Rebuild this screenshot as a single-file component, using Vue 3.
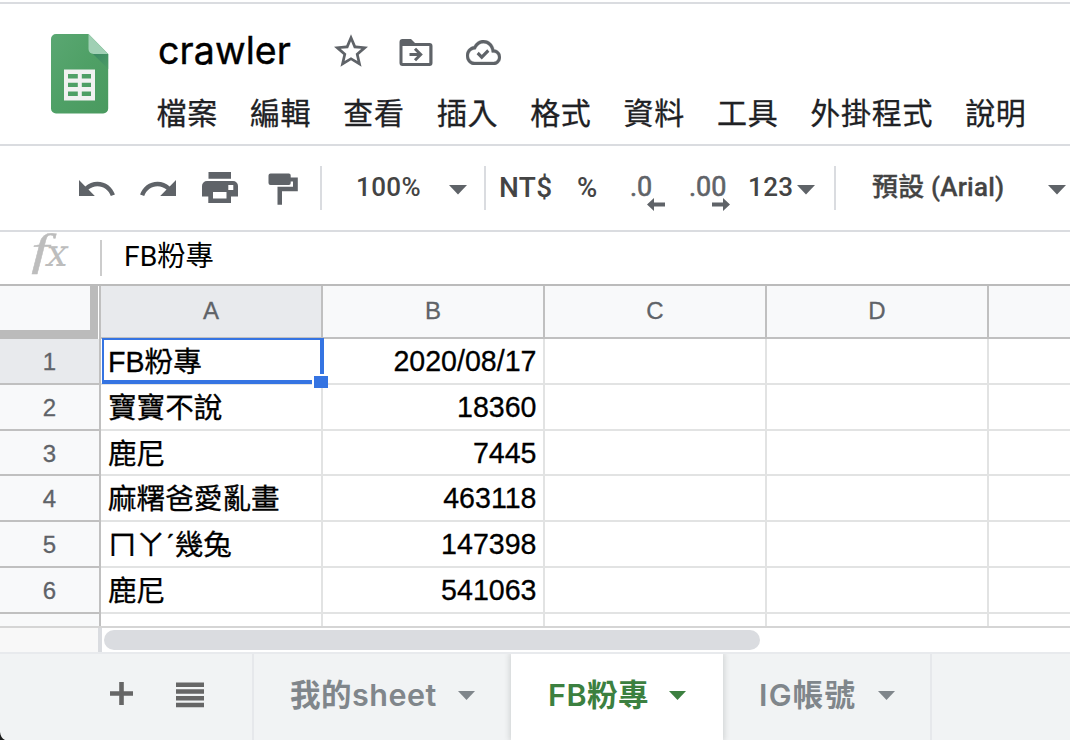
<script setup>
const menus = ['檔案', '編輯', '查看', '插入', '格式', '資料', '工具', '外掛程式', '說明']
const columns = ['A', 'B', 'C', 'D', '']
const rows = [
  ['FB粉專', '2020/08/17'],
  ['寶寶不說', '18360'],
  ['鹿尼', '7445'],
  ['麻糬爸愛亂畫', '463118'],
  ['ㄇㄚˊ幾兔', '147398'],
  ['鹿尼', '541063'],
]
</script>

<template>
  <div class="app">
    <header class="header">
      <svg class="logo" width="58" height="80" viewBox="0 0 58 80">
        <defs>
          <linearGradient id="doc" x1="0" y1="0" x2="1" y2="1">
            <stop offset="0" stop-color="#5aa772" />
            <stop offset="0.5" stop-color="#4fa066" />
            <stop offset="1" stop-color="#4a9a5f" />
          </linearGradient>
          <linearGradient id="fold" x1="0" y1="0" x2="1" y2="1">
            <stop offset="0" stop-color="#3a8763" />
            <stop offset="1" stop-color="#4c9d65" />
          </linearGradient>
        </defs>
        <path d="M5 0H37.500L57.200 20V74.500a5 5 0 0 1-5 5H5a5 5 0 0 1-5-5V5a5 5 0 0 1 5-5z" fill="url(#doc)" />
        <path d="M41 19L57.200 35V20z" fill="url(#fold)" />
        <path d="M37.500 0L57.200 20H42.500a5 5 0 0 1-5-5z" fill="#a0d0b4" />
        <path d="M13 35.500H44V66.500H13zM17 40V44.500H26.800V40zM30.800 40V44.500H40V40zM17 48.800V53H26.800V48.800zM30.800 48.800V53H40V48.800zM17 57.500V62H26.800V57.500zM30.800 57.500V62H40V57.500z" fill="#f1f1f1" fill-rule="evenodd" />
      </svg>
      <div class="head-main">
        <div class="title-row">
          <span class="title">crawler</span>
          <svg class="star" width="34" height="33" viewBox="2 2 20 19"><path d="M22 9.240l-7.190-.620L12 2 9.190 8.630 2 9.240l5.460 4.730L5.820 21 12 17.270 18.180 21l-1.630-7.030L22 9.240zM12 15.400l-3.760 2.270 1-4.280-3.320-2.880 4.380-.380L12 6.100l1.710 4.040 4.380.380-3.320 2.880 1 4.280L12 15.400z" /></svg>
          <svg class="folder" width="34" height="28" viewBox="0 0 34 28">
            <path d="M3.500 0H12L16 4H30.500A3 3 0 0 1 33.500 7V24A3 3 0 0 1 30.500 27H3.500A3 3 0 0 1 .500 24V3A3 3 0 0 1 3.500 0zM3.500 7V24H30.300V7z" fill-rule="evenodd" />
            <path d="M10.500 15.500H21M16 9.700L21.700 15.500L16 21.300" fill="none" stroke="#5f6368" stroke-width="3" />
          </svg>
          <svg class="cloud" width="35" height="25" viewBox="0 4 24 16" preserveAspectRatio="none">
            <path d="M19.350 10.040C18.670 6.590 15.640 4 12 4 9.110 4 6.600 5.640 5.350 8.040 2.340 8.360 0 10.910 0 14c0 3.310 2.690 6 6 6h13c2.760 0 5-2.240 5-5 0-2.640-2.050-4.780-4.650-4.960zM19 18H6c-2.210 0-4-1.790-4-4 0-2.050 1.530-3.760 3.560-3.970l1.070-.110.500-.950C8.080 7.140 9.940 6 12 6c2.620 0 4.880 1.860 5.390 4.430l.300 1.500 1.530.110c1.560.100 2.780 1.410 2.780 2.960 0 1.650-1.350 3-3 3z" stroke="#5f6368" stroke-width=".2" />
            <path d="M8 12.300L10.800 15L15.300 10.700" fill="none" stroke="#5f6368" stroke-width="2.100" />
          </svg>
        </div>
        <nav class="menus"><span v-for="m in menus" :key="m">{{ m }}</span></nav>
      </div>
    </header>

    <div class="toolbar">
      <svg class="undo" width="36" height="16" viewBox="2 7 20.500 9" preserveAspectRatio="none"><path d="M12.500 8c-2.650 0-5.050.990-6.900 2.600L2 7v9h9l-3.620-3.620c1.390-1.160 3.160-1.880 5.120-1.880 3.540 0 6.550 2.310 7.600 5.500l2.370-.780C21.080 11.030 17.150 8 12.500 8z" /></svg>
      <svg class="redo" width="36" height="16" viewBox="1.500 7 20.500 9" preserveAspectRatio="none"><path d="M18.400 10.600C16.550 8.990 14.150 8 11.500 8c-4.650 0-8.580 3.030-9.960 7.220L3.900 16c1.050-3.190 4.050-5.500 7.600-5.500 1.950 0 3.730.720 5.120 1.880L13 16h9V7l-3.600 3.600z" /></svg>
      <svg class="print" width="36" height="32" viewBox="0 0 36 32">
        <path d="M6.500 0H29V6.700H6.500zM5 9H31A5 5 0 0 1 36 14V24.500H29V31H6.300V24.500H0V14A5 5 0 0 1 5 9zM11 20V26.500H24.500V20zM26.300 13V18H31.300V13z" fill-rule="evenodd" />
      </svg>
      <svg class="paint" width="31" height="33" viewBox="0 0 31 33">
        <path d="M2.500 1.500H20.500A2 2 0 0 1 22.700 3.500V5.500H29.800V19.300H14V32.700H9.500V14.700H25V9.500H22.700V11A2 2 0 0 1 20.500 13H2.500A2 2 0 0 1 .500 11V3.500A2 2 0 0 1 2.500 1.500z" />
      </svg>
      <i class="sep s1"></i>
      <span class="txt zoom">100%</span>
      <svg class="caret c1" width="18" height="10" viewBox="0 0 18 10"><path d="M0 0H18L9 9.500z" /></svg>
      <i class="sep s2"></i>
      <span class="txt currency">NT$</span>
      <span class="txt percent">%</span>
      <span class="dec less">.0<svg width="18" height="13" viewBox="0 0 18 13"><path d="M0 6.500L7 0V4.500H18V8.500H7V13z" /></svg></span>
      <span class="dec more">.00<svg width="18" height="13" viewBox="0 0 18 13"><path d="M18 6.500L11 0V4.500H0V8.500H11V13z" /></svg></span>
      <span class="txt format">123</span>
      <svg class="caret c2" width="18" height="10" viewBox="0 0 18 10"><path d="M0 0H18L9 9.500z" /></svg>
      <i class="sep s3"></i>
      <span class="txt font">預設 (Arial)</span>
      <svg class="caret c3" width="18" height="10" viewBox="0 0 18 10"><path d="M0 0H18L9 9.500z" /></svg>
    </div>

    <div class="formula">
      <span class="fx"><em class="f">f</em><em class="x">x</em></span>
      <span class="value">FB粉專</span>
    </div>

    <div class="sheet">
      <div class="row head">
        <div class="corner"></div>
        <div v-for="(c, i) in columns" :key="i" class="col" :class="{ on: i === 0 }">{{ c }}</div>
      </div>
      <div v-for="(r, i) in rows" :key="i" class="row line" :class="{ short: i === 2 }">
        <div class="num" :class="{ on: i === 0 }">{{ i + 1 }}</div>
        <div class="cell">{{ r[0] }}</div>
        <div class="cell right">{{ r[1] }}</div>
        <div class="cell"></div>
        <div class="cell"></div>
        <div class="cell"></div>
      </div>
      <div class="row partial">
        <div class="num"></div>
        <div v-for="n in 5" :key="n" class="cell"></div>
      </div>
      <div class="selection"><i></i></div>
    </div>

    <div class="scroll"><div class="gutter"></div><div class="thumb"></div></div>

    <footer class="tabs">
      <div class="tools">
        <svg class="plus" width="23" height="23" viewBox="0 0 23 23"><path d="M9.200 0h4.600v9.200H23v4.600h-9.200V23H9.200v-9.200H0V9.200h9.200z" /></svg>
        <svg class="list" width="28" height="26" viewBox="0 0 28 26"><path d="M0 .500H28V5H0zM0 7.300H28V11.800H0zM0 14H28V18.500H0zM0 20.800H28V25.300H0z" /></svg>
      </div>
      <div class="tab first"><span>我的sheet</span><svg width="17" height="9" viewBox="0 0 17 9"><path d="M0 0H17L8.500 9z" /></svg></div>
      <div class="tab active"><span>FB粉專</span><svg width="17" height="9" viewBox="0 0 17 9"><path d="M0 0H17L8.500 9z" /></svg></div>
      <div class="tab third"><span>IG帳號</span><svg width="17" height="9" viewBox="0 0 17 9"><path d="M0 0H17L8.500 9z" /></svg></div>
      <svg class="edge" width="5" height="8" viewBox="0 0 5 8"><path d="M0 0C.500 4 2 6.500 5 8H0z" fill="#1c1c1c" /></svg>
    </footer>
  </div>
</template>

<style>
body { margin: 0; overflow: hidden; background: #fff; }
</style>

<style scoped>
.app { width: 1070px; height: 740px; overflow: hidden; background: #fff; font-family: Roboto, "Noto Sans CJK TC", sans-serif; display: flex; flex-direction: column; }
.app * { box-sizing: border-box; white-space: nowrap; }
svg { display: block; flex: none; fill: #5f6368; }

.header { height: 144px; margin-top: 2px; border-top: 2px solid #dadce0; border-bottom: 2px solid #dadce0; display: flex; flex: none; padding: 30px 0 0 51px; }
.head-main { margin-left: 48px; }
.title-row { display: flex; height: 36px; }
.title { width: 178px; padding-left: 1px; font: 400 37.500px/36px Inter, sans-serif; letter-spacing: 0.100px; color: #000; margin-top: -1px; -webkit-text-stroke: .400px #000; }
.star { margin-left: -1px; }
.folder { margin: 5px 0 0 31px; }
.cloud { margin: 6px 0 0 33px; }
.menus { display: flex; gap: 32px; margin: 19px 0 0 -.500px; font: 400 30px/44px "Noto Sans CJK TC", sans-serif; letter-spacing: .700px; color: #202124; -webkit-text-stroke: .300px #202124; }

.toolbar { height: 86px; border-bottom: 2px solid #dadce0; flex: none; display: flex; align-items: flex-start; padding-left: 79px; color: #444; }
.undo { margin-top: 34px; }
.redo { margin: 34px 0 0 25px; }
.print { margin: 26px 0 0 26px; }
.paint { margin: 26px 0 0 30px; }
.sep { flex: none; width: 2px; height: 44px; margin-top: 20px; background: #dadce0; }
.s1 { margin-left: 21px; }
.txt { flex: none; font: 500 26px/40px Roboto, "Noto Sans CJK TC", sans-serif; letter-spacing: .400px; margin-top: 21px; }
.zoom { width: 93px; margin-left: 34px; }
.caret { margin-top: 39px; }
.s2 { margin-left: 17px; }
.currency { width: 78px; margin-left: 13px; margin-top: 22px; font-size: 28px; }
.percent { width: 53px; margin-top: 22px; font-size: 27.500px; }
.dec { flex: none; position: relative; font: 400 27px/40px Roboto, sans-serif; -webkit-text-stroke: .600px #5f6368; color: #5f6368; margin-top: 21px; height: 48px; }
.less { width: 59px; }
.more { width: 59px; }
.dec svg { position: absolute; top: 31px; stroke: none; }
.less svg { left: 17px; }
.more svg { left: 23px; }
.format { width: 49px; }
.s3 { margin-left: 19px; }
.font { width: 176px; margin-left: 36px; letter-spacing: .200px; -webkit-text-stroke: .300px #444; }

.formula { height: 54px; border-bottom: 2px solid #bbb; flex: none; display: flex; padding-left: 28px; }
.fx { width: 74px; height: 36px; margin-top: 8px; border-right: 2px solid #ccc; color: #bdbdbd; display: flex; }
.f { font: italic 400 44px/22px "Liberation Serif", serif; width: 12px; transform: scaleX(1.450); margin-left: 6px; -webkit-text-stroke: .400px #bdbdbd; }
.x { font: normal 400 38px/26px "DejaVu Serif", serif; transform: skewX(-12deg); }
.value { margin-left: 22px; padding-top: 4px; font: 400 28.300px/42px Roboto, "Noto Sans CJK TC", sans-serif; color: #000; }

.sheet { position: relative; height: 342px; flex: none; border-bottom: 2px solid #d5d5d5; overflow: hidden; font-family: "Liberation Sans", "Noto Sans CJK TC", sans-serif; }
.row { display: grid; grid-template-columns: 101px repeat(5, 222px); grid-template-rows: 100%; }
.head { height: 53px; }
.corner { background: #f8f9fa; border-right: 2px solid #c0c0c0; border-bottom: 0; box-shadow: inset -1px 0 #fff, inset -9px -9px #bbb; }
.col { background: #f8f9fa; border-right: 2px solid #c0c0c0; border-bottom: 2px solid #c0c0c0; color: #5f6368; font-size: 24px; line-height: 49px; text-align: center; -webkit-text-stroke: .300px #5f6368; }
.col.on, .num.on { background: #e8eaed; }
.line { height: 46px; }
.line.short { height: 45px; }
.partial { height: 13px; }
.num { border-right: 2px solid #c0c0c0; border-bottom: 2px solid #c0c0c0; background: #f8f9fa; color: #5f6368; font-size: 24px; line-height: 45px; text-align: center; -webkit-text-stroke: .300px #5f6368; }
.cell { border-right: 2px solid #e2e3e3; border-bottom: 2px solid #e2e3e3; font-size: 28.600px; line-height: 46px; padding: 0 6px 0 7px; color: #000; overflow: hidden; -webkit-text-stroke: .300px #000; }
.right { text-align: right; line-height: 45px; padding-right: 6.500px; }
.partial > div { border-bottom: 0; }
.selection { position: absolute; left: 102px; top: 52px; width: 222px; height: 46px; border: solid #3574e2; border-width: 2px 4px 4px 2px; }
.selection i { position: absolute; right: -8px; bottom: -8px; width: 16px; height: 14px; background: #3574e2; border: solid #fff; border-width: 2px 0 0 2px; }

.scroll { height: 24px; flex: none; display: flex; }
.gutter { width: 102px; background: #f8f8f8; border-right: 4px solid #dadce0; }
.thumb { width: 656px; height: 20px; margin: 2px 0 0 2px; border-radius: 10px; background: #dadce0; }

.tabs { position: relative; height: 88px; flex: none; background: #f1f3f4; border-top: 2px solid #e8eaed; display: flex; font: 600 30.500px/82px Inter, "Noto Sans CJK TC", sans-serif; letter-spacing: .500px; color: #80868b; }
.tools { width: 254px; border-right: 2px solid #e6e8eb; display: flex; padding: 28px 0 0 110px; }
.tools svg { fill: #666; }
.list { margin-left: 43px; }
.tab { display: flex; }
.tab svg { fill: currentColor; margin-top: 37px; }
.tab span { flex: none; }
.first { width: 257px; padding-left: 36px; }
.first span { width: 168px; }
.active { position: relative; width: 212px; padding-left: 37px; color: #3c8040; background: #fff; box-shadow: 0 0 6px 1px rgba(60, 64, 67, .2); clip-path: inset(0 -12px); }
.active span { width: 121px; }
.third { width: 209px; padding-left: 36px; border-right: 2px solid #e6e8eb; }
.third span { width: 119px; letter-spacing: 1.200px; }
.edge { position: absolute; left: 0; bottom: 0; }
</style>
